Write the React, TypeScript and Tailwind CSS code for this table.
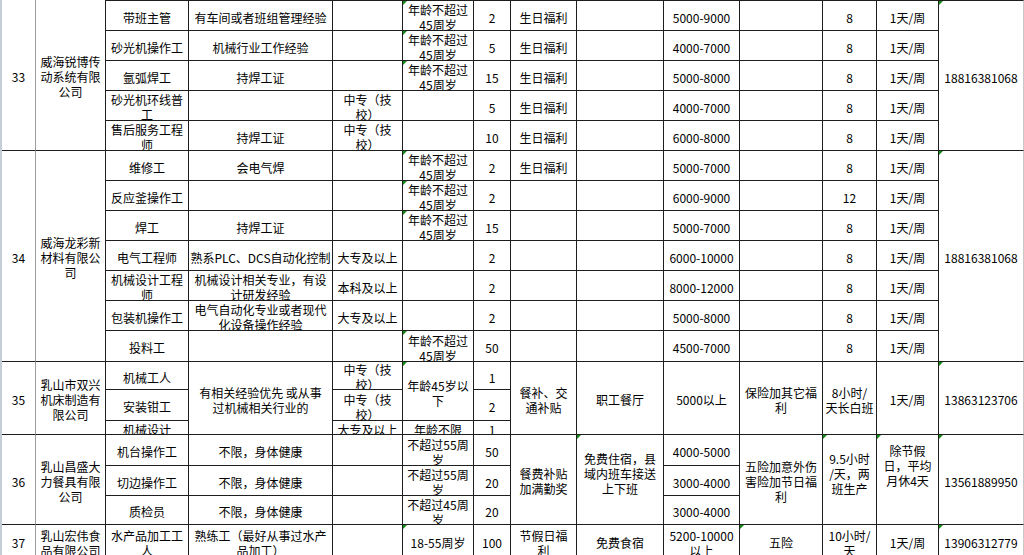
type Cell = { t: string; span: number; tri: boolean; cls: string };

// full class names only – looked up by span size
const SPAN: Record<number, string> = {
  1: '',
  2: 'row-span-2',
  3: 'row-span-3',
  5: 'row-span-5',
  7: 'row-span-7',
};

const c = (t: string, span = 1, tri = false, cls = ''): Cell => ({ t, span, tri, cls });

const A = 'border-r-[#9c9c9c]';
const N = 'border-r-[#c8c8c8]';
const AGE = '年龄不超过\n45周岁';
const TECH = '中专（技\n校）';

// rows in reading order; cells covered by a span above are left out (grid auto-placement fills like a table)
const rows: Cell[][] = [
  [c('33', 5, false, A), c('威海锐博传\n动系统有限\n公司', 5), c('带班主管'), c('有车间或者班组管理经验'), c(''), c(AGE, 1, true), c('2'), c('生日福利'), c(''), c('5000-9000'), c(''), c('8'), c('1天/周'), c('18816381068', 5, true, N)],
  [c('砂光机操作工'), c('机械行业工作经验'), c(''), c(AGE, 1, true), c('5'), c('生日福利'), c(''), c('4000-7000'), c(''), c('8'), c('1天/周')],
  [c('氩弧焊工'), c('持焊工证'), c(''), c(AGE, 1, true), c('15'), c('生日福利'), c(''), c('5000-8000'), c(''), c('8'), c('1天/周')],
  [c('砂光机环线普\n工'), c(''), c(TECH), c(''), c('5'), c('生日福利'), c(''), c('4000-7000'), c(''), c('8'), c('1天/周')],
  [c('售后服务工程\n师'), c('持焊工证'), c(TECH), c(''), c('10'), c('生日福利'), c(''), c('6000-8000'), c(''), c('8'), c('1天/周')],

  [c('34', 7, false, A), c('威海龙彩新\n材料有限公\n司', 7), c('维修工'), c('会电气焊'), c(''), c(AGE, 1, true), c('2'), c('生日福利'), c(''), c('5000-7000'), c(''), c('8'), c('1天/周'), c('18816381068', 7, true, N)],
  [c('反应釜操作工'), c(''), c(''), c(AGE, 1, true), c('2'), c(''), c(''), c('6000-9000'), c(''), c('12'), c('1天/周')],
  [c('焊工'), c('持焊工证'), c(''), c(AGE, 1, true), c('15'), c(''), c(''), c('5000-7000'), c(''), c('8'), c('1天/周')],
  [c('电气工程师'), c('熟系PLC、DCS自动化控制'), c('大专及以上'), c(''), c('2'), c(''), c(''), c('6000-10000'), c(''), c('8'), c('1天/周')],
  [c('机械设计工程\n师'), c('机械设计相关专业，有设\n计研发经验'), c('本科及以上'), c(''), c('2'), c(''), c(''), c('8000-12000'), c(''), c('8'), c('1天/周')],
  [c('包装机操作工'), c('电气自动化专业或者现代\n化设备操作经验'), c('大专及以上'), c(''), c('2'), c(''), c(''), c('5000-8000'), c(''), c('8'), c('1天/周')],
  [c('投料工'), c(''), c(''), c(AGE, 1, true), c('50'), c(''), c(''), c('4500-7000'), c(''), c('8'), c('1天/周')],

  [c('35', 3, false, A), c('乳山市双兴\n机床制造有\n限公司', 3), c('机械工人'), c('有相关经验优先 或从事\n过机械相关行业的', 3), c(TECH), c('年龄45岁以\n下', 2, true), c('1'), c('餐补、交\n通补贴', 3), c('职工餐厅', 3), c('5000以上', 3), c('保险加其它福\n利', 3), c('8小时/\n天长白班', 3), c('1天/周', 3), c('13863123706', 3, true, N)],
  [c('安装钳工'), c(TECH), c('2')],
  [c('机械设计'), c('大专及以上'), c('年龄不限'), c('1')],

  [c('36', 3, false, A), c('乳山昌盛大\n力餐具有限\n公司', 3), c('机台操作工'), c('不限，身体健康'), c(''), c('不超过55周\n岁'), c('50'), c('餐费补贴\n加满勤奖', 3), c('免费住宿，县\n域内班车接送\n上下班', 3, true, 'pb-[16px]'), c('4000-5000'), c('五险加意外伤\n害险加节日福\n利', 3), c('9.5小时\n/天，两\n班生产', 3, true, 'pb-[16px]'), c('除节假\n日，平均\n月休4天', 3, true, 'pb-[32px]'), c('13561889950', 3, true, N)],
  [c('切边操作工'), c('不限，身体健康'), c(''), c('不超过55周\n岁'), c('20'), c('3000-4000')],
  [c('质检员'), c('不限，身体健康'), c(''), c('不超过45周\n岁'), c('20'), c('3000-4000')],

  [c('37', 1, false, A), c('乳山宏伟食\n品有限公司'), c('水产品加工工\n人'), c('熟练工（最好从事过水产\n品加工）'), c(''), c('18-55周岁', 1, true), c('100'), c('节假日福\n利'), c('免费食宿'), c('5200-10000\n以上'), c('五险', 1, true), c('10小时/\n天'), c('1天/周'), c('13906312779', 1, true, N)],
];

function SheetCell({ cell, top }: { cell: Cell; top: boolean }) {
  return (
    <div
      className={[
        'relative flex items-center justify-center overflow-hidden whitespace-pre text-center border-r border-b border-[#1e1e1e] pt-[3px]',
        SPAN[cell.span],
        top ? 'border-t' : '',
        cell.cls,
      ].join(' ')}
    >
      {cell.tri && (
        <span className="absolute left-0 top-0 h-0 w-0 border-t-[4px] border-r-[4px] border-t-[#138a13] border-r-transparent" />
      )}
      {cell.t}
    </div>
  );
}

export default function App() {
  return (
    <div className="flex h-[555px] w-[1024px] overflow-hidden bg-white text-[12px] leading-[15px] text-black font-['Noto_Sans_CJK_SC','Noto_Sans',sans-serif]">
      {/* sheet edge */}
      <div className="w-[2px] shrink-0 bg-[#c5cdd9]" />
      <div className="grid grid-cols-[34px_70px_83px_144px_70px_71px_37px_66px_87px_76px_83px_54px_62px_85px] grid-rows-[31px_30px_30px_30px_30px_30px_30px_30px_30px_30px_30px_31px_28px_31px_14px_31px_30px_29px_33px]">
        {rows.map((row, ri) =>
          row.map((cell, ci) => (
            <SheetCell key={`${ri}-${ci}`} cell={cell} top={ri === 0 && ci >= 2} />
          )),
        )}
      </div>
    </div>
  );
}
